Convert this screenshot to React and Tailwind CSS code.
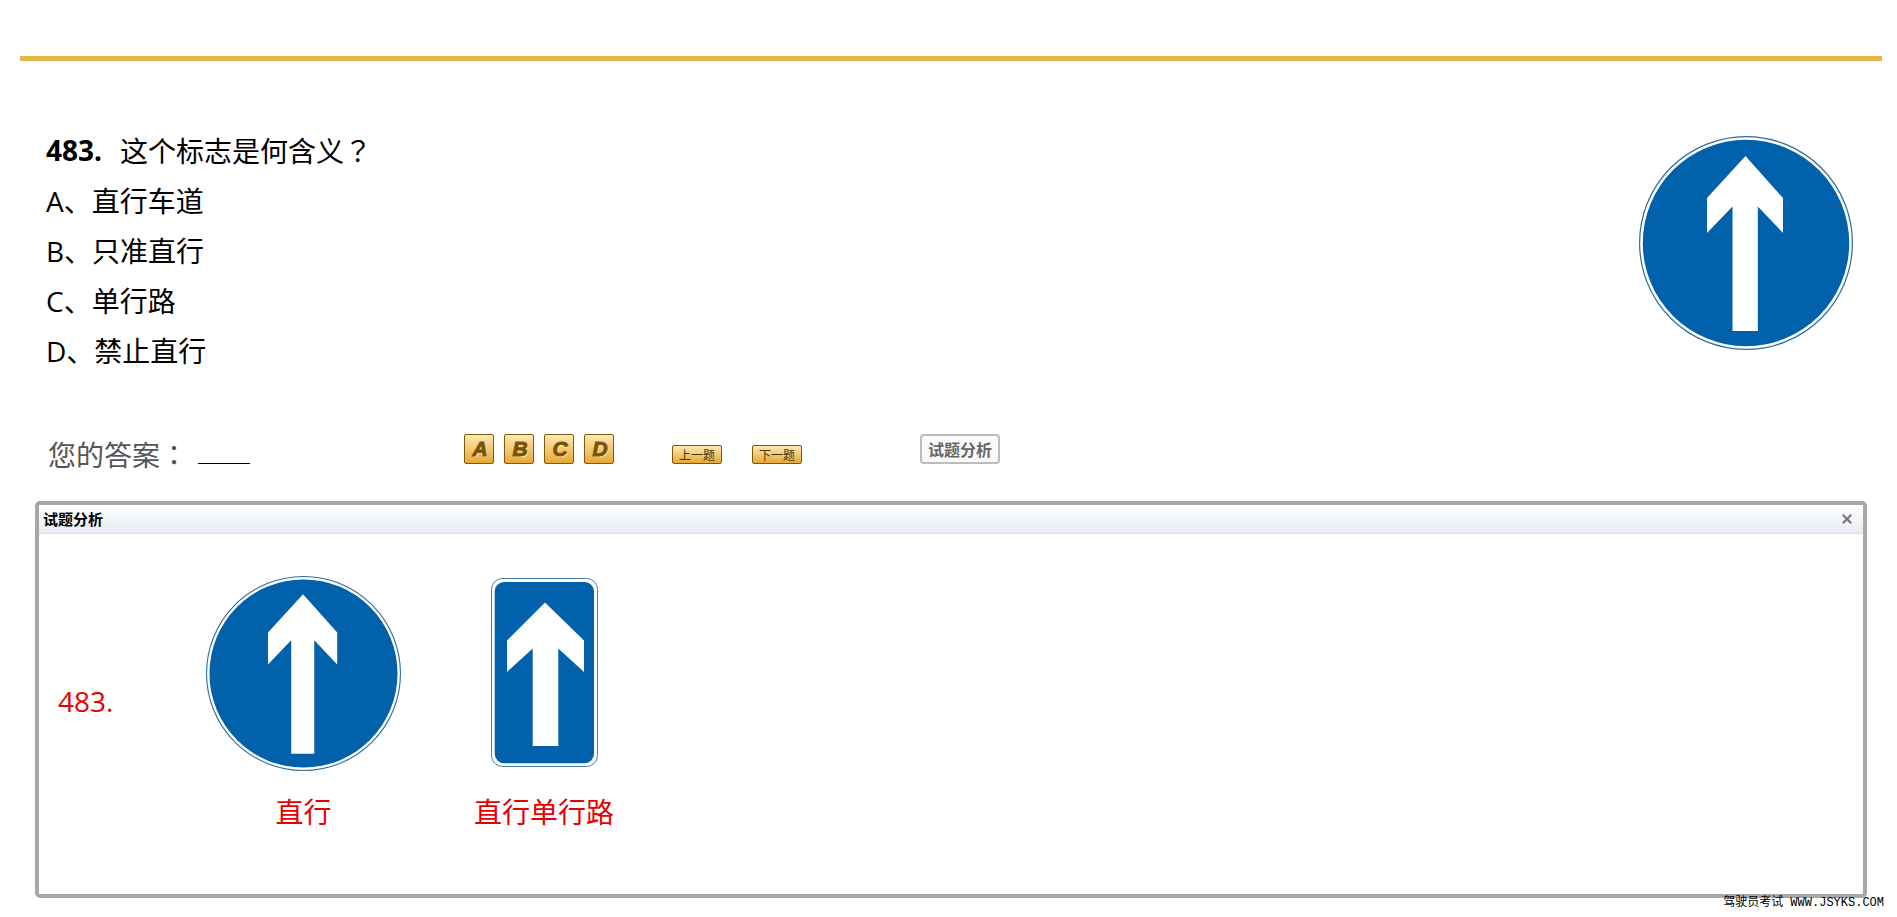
import React from 'react';

const OPTIONS = [
  ['A', '直行车道'],
  ['B', '只准直行'],
  ['C', '单行路'],
  ['D', '禁止直行'],
];

function Punct({ children }) {
  return <span className="font-['Noto_Sans_CJK_TC',sans-serif]">{children}</span>;
}

function RoundSign({ className }) {
  return (
    <svg viewBox="0 0 214 214" className={className} role="img" aria-label="直行">
      <circle cx="107" cy="107" r="106.4" fill="#fff" stroke="#2f6c9b" strokeWidth="1.2" />
      <circle cx="107" cy="107" r="103.2" fill="#0161aa" />
      <path fill="#fff" d="M106.5 20 144 62V97L118.8 70.5V195H93.5V70.5L68 97V62Z" />
    </svg>
  );
}

function OneWaySign({ className }) {
  return (
    <svg viewBox="0 0 107 189" className={className} role="img" aria-label="直行单行路">
      <rect x=".5" y=".5" width="106" height="188" rx="11" fill="#fff" stroke="#4a80ab" />
      <rect x="3.7" y="4" width="99.3" height="181.3" rx="9.5" fill="#0161aa" />
      <path fill="#fff" d="M54 24.5 93 62.5V94L67.3 70.5V168H41.7V70.5L16 94V62.5Z" />
    </svg>
  );
}

const goldNav =
  "h-[19px] w-[50px] rounded-[2px] border border-[#80590c] bg-linear-to-b from-[#fde9b0] to-[#e5a92b] text-[12px] leading-4 text-[#4a3605] font-['Noto_Sans_CJK_SC',sans-serif]";

export default function App() {
  return (
    <div className="bg-white pl-5 pr-[13px] pt-14 font-['Open_Sans','Noto_Sans_CJK_SC',sans-serif] text-[28px] leading-[50px] text-black">
      <hr className="mr-[2px] h-[5px] border-0 bg-[#e5b64c]" />

      <section className="flex items-start justify-between pl-[26px] pr-[31px] pt-16">
        <div>
          <h1 className="flex gap-[18px] font-normal">
            <b>483.</b>
            <span>
              这个标志是何含义<Punct>？</Punct>
            </span>
          </h1>
          <ul>
            {OPTIONS.map(([key, text]) => (
              <li key={key}>
                {key}、{text}
              </li>
            ))}
          </ul>
        </div>
        <RoundSign className="mt-[11px] size-[214px]" />
      </section>

      <section className="flex items-start pl-7 pt-[54px]">
        <div className="flex w-[416px] leading-[48px] text-[#555]">
          <span>
            您的答案<Punct>：</Punct>
          </span>
          <span className="ml-[10px] h-[34px] w-[52px] border-b border-black" />
        </div>
        <div className="flex h-[34px] items-end pt-1">
          <div className="flex gap-[10px]">
            {OPTIONS.map(([key]) => (
              <button
                key={key}
                className="size-[30px] rounded-[2px] border border-[#80590c] bg-linear-to-b from-[#fde9b0] to-[#e5a92b] pl-[2px] font-['Liberation_Sans',sans-serif] text-[21px] font-black italic leading-7 text-[#7a5406] [-webkit-text-stroke:1px_#7a5406] [text-shadow:1px_1px_0_#fff3c8]"
              >
                {key}
              </button>
            ))}
          </div>
          <button className={`ml-[58px] ${goldNav}`}>上一题</button>
          <button className={`ml-[30px] ${goldNav}`}>下一题</button>
          <button className="ml-[118px] h-[30px] w-20 rounded-[4px] border-2 border-[#bcbcbc] bg-[#fafafc] font-['Noto_Sans_CJK_SC',sans-serif] text-[16px] font-bold leading-[26px] text-[#666]">
            试题分析
          </button>
        </div>
      </section>

      <section className="ml-[15px] mr-[17px] mt-[22px] rounded-[5px] border-4 border-[#a7a7a7] pb-[57px]">
        <header className="flex h-[29px] items-center justify-between border-b border-[#d9e2ea] bg-linear-to-b from-white to-[#e7ebf2] pl-1 pr-[11px]">
          <h2 className="font-['Noto_Sans_CJK_SC',sans-serif] text-[15px] font-bold leading-7">试题分析</h2>
          <button aria-label="关闭" className="text-[#777]">
            <svg viewBox="0 0 10 10" className="size-[10px]" stroke="currentColor" strokeWidth="2.2">
              <path d="M.8.8 9.2 9.2M9.2.8.8 9.2" />
            </svg>
          </button>
        </header>
        <div className="flex items-start pl-[19px] pt-[42px] text-[#e80000]">
          <p className="w-[148px] pt-[100px]">483.</p>
          <figure className="flex w-[195px] flex-col items-center">
            <RoundSign className="size-[195px]" />
            <figcaption className="mt-4">直行</figcaption>
          </figure>
          <figure className="ml-[73px] flex flex-col items-center">
            <OneWaySign className="mt-[2px] h-[189px] w-[107px]" />
            <figcaption className="mt-5">直行单行路</figcaption>
          </figure>
        </div>
      </section>

      <footer className="-mt-[1px] text-right font-['Liberation_Mono','Noto_Sans_CJK_SC',monospace] text-[12px] leading-3">
        驾驶员考试 WWW.JSYKS.COM
      </footer>
    </div>
  );
}
